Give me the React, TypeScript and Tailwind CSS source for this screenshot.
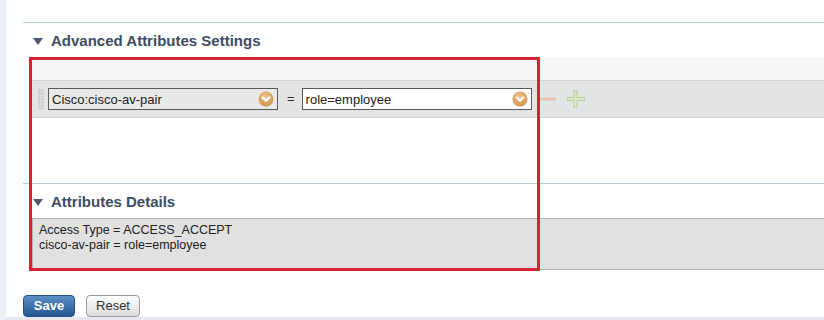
import React from "react";

const Chevron = () => (
  <svg width="16" height="16" viewBox="0 0 16 16" className="shrink-0">
    <defs>
      <radialGradient id="cg" cx="0.45" cy="0.35" r="0.7">
        <stop offset="0" stopColor="#f0c48a" />
        <stop offset="1" stopColor="#cf8f48" />
      </radialGradient>
    </defs>
    <circle cx="8" cy="8" r="7.5" fill="url(#cg)" />
    <path d="M4.6 6.4 L8 9.6 L11.4 6.4" fill="none" stroke="#fff" strokeWidth="2.2" strokeLinecap="round" strokeLinejoin="round" />
  </svg>
);

const Handle = () => (
  <svg width="6" height="20" viewBox="0 0 6 20" className="shrink-0">
    {Array.from({ length: 7 }).map((_, r) =>
      [0, 3].map((c) => <rect key={`${r}-${c}`} x={c + 0.5} y={r * 3 + 0.5} width="2" height="2" fill="#c4c4c4" />)
    )}
  </svg>
);

const Triangle = () => (
  <svg width="10" height="7" viewBox="0 0 10 7" className="shrink-0">
    <path d="M0 0 H10 L5 7 Z" fill="#4a5a72" />
  </svg>
);

const Select = ({ value, disabled }: { value: string; disabled?: boolean }) => (
  <div
    className={`flex items-center justify-between w-[230px] h-[22px] border border-[#5a5a5a] pl-[3px] pr-[3px] ${
      disabled ? "bg-[#e9e9e9]" : "bg-white"
    }`}
  >
    <span className="text-[13px] text-[#222] leading-none">{value}</span>
    <Chevron />
  </div>
);

const Heading = ({ title, h }: { title: string; h: string }) => (
  <div className={`flex items-center pl-[10px] gap-[8px] ${h}`}>
    <Triangle />
    <span className="text-[15px] font-bold text-[#3d4c64]">{title}</span>
  </div>
);

export default function App() {
  return (
    <div
      className="relative flex w-[824px] h-[320px] bg-white overflow-hidden"
      style={{ fontFamily: '"Liberation Sans", Arial, sans-serif' }}
    >
      <div className="w-[6px] shrink-0 bg-[#eef0f7]" />
      <div className="flex flex-col flex-1 pl-[17px]">
        <div className="h-[22px]" />
        <div className="border-t border-[#b9cad3]" />
        <Heading title="Advanced Attributes Settings" h="h-[34px] pt-[2px]" />
        <div className="ml-[7px] flex flex-col">
          <div className="h-[23px] bg-[#f6f6f6]" />
          <div className="h-[38px] bg-[#e3e4e5] border-y border-[#d2d3d4] flex items-center pl-[8px]">
            <Handle />
            <div className="ml-[4px]">
              <Select value="Cisco:cisco-av-pair" disabled />
            </div>
            <span className="ml-[9px] mr-[7px] text-[13px] text-[#333]">=</span>
            <Select value="role=employee" />
            <svg width="50" height="20" viewBox="0 0 50 20" className="ml-[7px]">
              <rect x="1" y="8.5" width="16" height="3" fill="#e9c2b3" />
              <path d="M36.5 1 V19 M28 10 H46" stroke="#b9cf98" strokeWidth="4" />
              <path d="M36.5 1.8 V18.2 M28.8 10 H45.2" stroke="#dbe8c8" strokeWidth="2" />
            </svg>
          </div>
        </div>
        <div className="h-[65px]" />
        <div className="border-t border-[#b9cad3]" />
        <Heading title="Attributes Details" h="h-[34px] pt-[3px]" />
        <div className="ml-[9px] h-[52px] bg-[#e1e1e1] border-y border-l border-[#b3b3b3] pl-[6px] pt-[4px] text-[12.5px] leading-[15px] text-[#222]">
          <div>Access Type = ACCESS_ACCEPT</div>
          <div>cisco-av-pair = role=employee</div>
        </div>
        <div className="h-[25px]" />
        <div className="flex gap-[11px]">
          <button className="w-[52px] h-[22px] rounded-[4px] border border-[#22508a] bg-gradient-to-b from-[#5b8fc7] to-[#25578f] text-white text-[13px] font-bold">
            Save
          </button>
          <button className="w-[54px] h-[22px] rounded-[4px] border border-[#9a9a9a] bg-gradient-to-b from-white to-[#dcdcdc] text-[#333] text-[13px]">
            Reset
          </button>
        </div>
        <div className="flex-1" />
        <div className="h-[3px] bg-[#e6e8ee] -ml-[17px]" />
      </div>
      <div className="absolute left-[29px] top-[57px] w-[511px] h-[214px] border-[3px] border-[#d42331] pointer-events-none" />
    </div>
  );
}
